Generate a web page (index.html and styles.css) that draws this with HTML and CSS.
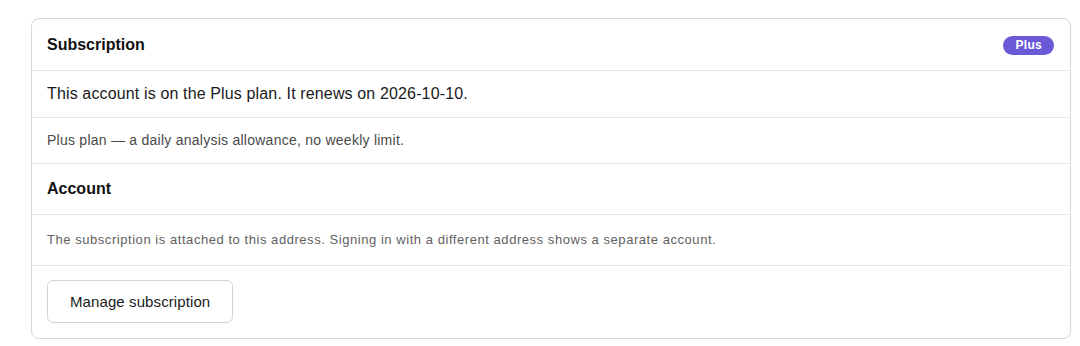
FILE: index.html
```html
<!DOCTYPE html>
<html lang="en">
<head>
<meta charset="utf-8">
<title>Subscription</title>
<link rel="stylesheet" href="styles.css">
</head>
<body>
<div class="page">
  <section class="card">
    <div class="row head first">
      <h2 class="title">Subscription</h2>
      <span class="badge">Plus</span>
    </div>
    <div class="row status">This account is on the Plus plan. It renews on 2026-10-10.</div>
    <div class="row note">Plus plan — a daily analysis allowance, no weekly limit.</div>
    <div class="row head">
      <h2 class="title">Account</h2>
    </div>
    <div class="row small">The subscription is attached to this address. Signing in with a different address shows a separate account.</div>
    <div class="row actions">
      <button class="btn" type="button">Manage subscription</button>
    </div>
  </section>
</div>
</body>
</html>
```
FILE: styles.css
```css
* { box-sizing: border-box; }
html, body { margin: 0; padding: 0; background: #fff; }
body {
  font-family: "Liberation Sans", Arial, Helvetica, sans-serif;
  color: #1a1a1a;
}
.page {
  padding: 18px 9px 0 31px;
}
.card {
  border: 1px solid #d6d6d6;
  border-radius: 8px;
  background: #fff;
}
.row {
  padding: 12px 15px;
  border-bottom: 1px solid #e8e8e8;
}
.row:last-child { border-bottom: none; }
.head {
  display: flex;
  align-items: center;
  justify-content: space-between;
  padding: 15px 16px 15px 15px;
}
.head.first { padding-top: 16px; }
.title {
  margin: 0;
  font-size: 16px;
  font-weight: 700;
  line-height: 20px;
  color: #111;
}
.badge {
  display: inline-block;
  background: #6b5ad8;
  color: #fff;
  font-size: 12px;
  font-weight: 700;
  line-height: 19px;
  padding: 0 12px;
  border-radius: 10px;
  letter-spacing: 0.3px;
}
.status {
  font-size: 16px;
  line-height: 22px;
  letter-spacing: 0.14px;
  color: #1a1a1a;
}
.note {
  font-size: 14px;
  line-height: 21px;
  letter-spacing: 0.25px;
  color: #4a4a4a;
}
.small {
  font-size: 13px;
  line-height: 20px;
  padding: 15px 15px;
  letter-spacing: 0.55px;
  color: #5f5f5f;
}
.actions {
  padding: 14px 15px 15px;
}
.btn {
  font-family: inherit;
  font-size: 15px;
  line-height: 19px;
  letter-spacing: 0.1px;
  color: #1a1a1a;
  background: #fff;
  border: 1px solid #d4d4d4;
  border-radius: 6px;
  padding: 11px 22px;
  cursor: pointer;
}
```
